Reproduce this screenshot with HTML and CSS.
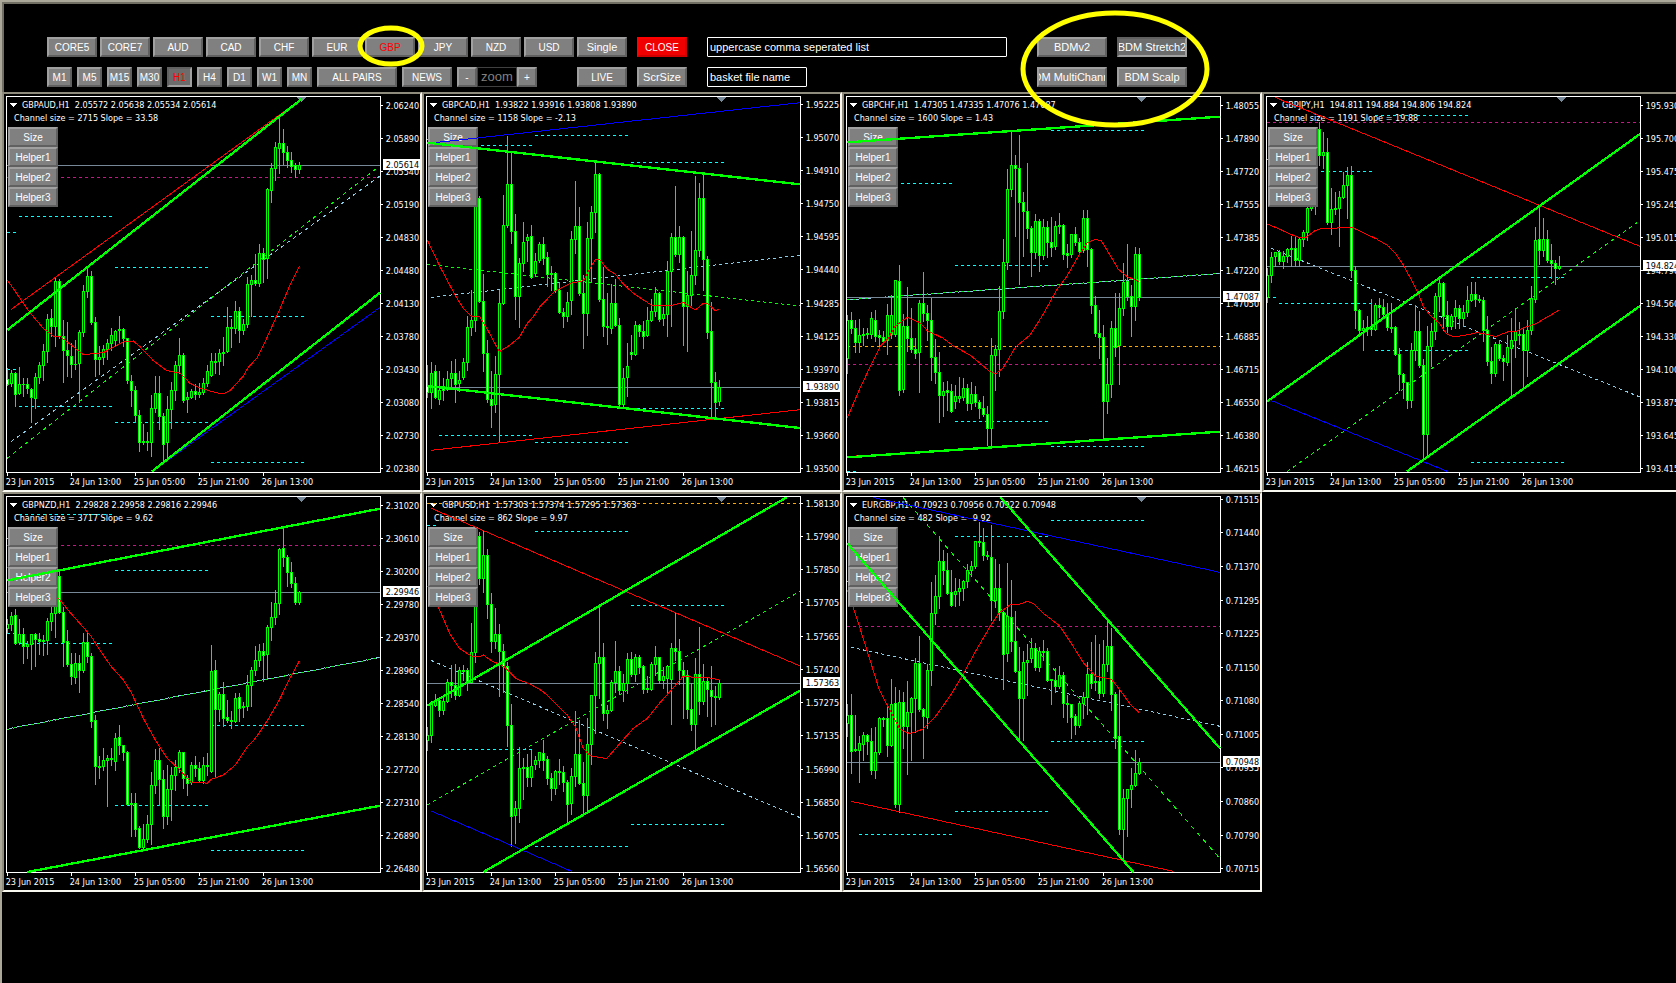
FILE: index.html
```html
<!DOCTYPE html>
<html lang="en">
<head>
<meta charset="utf-8">
<title>Basket charts</title>
<link rel="stylesheet" href="styles.css">
</head>
<body>
<header class="toolbar">
  <div class="rows pairs">
    <div class="row">
      <button class="btn">CORE5</button><button class="btn">CORE7</button><button class="btn">AUD</button><button class="btn">CAD</button><button class="btn">CHF</button><button class="btn">EUR</button><button class="btn active">GBP</button><button class="btn">JPY</button><button class="btn">NZD</button><button class="btn">USD</button>
    </div>
    <div class="row frames">
      <button class="btn tf">M1</button><button class="btn tf">M5</button><button class="btn tf">M15</button><button class="btn tf">M30</button><button class="btn tf active pressed">H1</button><button class="btn tf">H4</button><button class="btn tf">D1</button><button class="btn tf">W1</button><button class="btn tf">MN</button><button class="btn all">ALL PAIRS</button><button class="btn">NEWS</button>
      <div class="zoom"><button class="btn step">-</button><span class="zoom-label">zoom</span><button class="btn step">+</button></div>
    </div>
  </div>
  <div class="rows modes">
    <button class="btn mixed">Single</button>
    <button class="btn">LIVE</button>
  </div>
  <div class="rows actions">
    <button class="btn close">CLOSE</button>
    <button class="btn mixed">ScrSize</button>
  </div>
  <div class="rows fields">
    <input class="field" type="text" aria-label="Symbol list" value="uppercase comma seperated list">
    <input class="field short" type="text" aria-label="Basket file" value="basket file name">
  </div>
  <div class="rows">
    <div class="row templates"><button class="btn tpl">BDMv2</button><button class="btn tpl pressed">BDM Stretch2</button></div>
    <div class="row templates"><button class="btn tpl">BDM MultiChannel</button><button class="btn tpl">BDM Scalp</button></div>
  </div>
</header>
<main class="charts" id="charts"></main>
<svg class="marks" width="1240" height="140" viewBox="0 0 1240 140" aria-hidden="true">
  <ellipse cx="391" cy="46" rx="31" ry="18"/>
  <ellipse cx="1115" cy="69" rx="92" ry="56"/>
</svg>
<script src="charts.js"></script>
</body>
</html>
```
FILE: styles.css
```css
* { box-sizing: border-box; }

body {
  margin: 0;
  min-height: 100vh;
  overflow: hidden;
  position: relative;
  background: #000;
  color: #fff;
  font-family: "Liberation Sans", sans-serif;
  font-size: 10px;
  border-top: 2px solid #aca899;
  border-left: 2px solid #aca899;
}

.toolbar {
  display: flex;
  padding: 33px 0 5px 43px;
  border-top: 2px solid #716f64;
  border-left: 2px solid #716f64;
}
.rows { display: flex; flex-direction: column; gap: 10px; flex: none; }
.row { display: flex; gap: 3px; }
.pairs { margin-right: 3px; }
.frames { gap: 5px; }
.zoom { display: flex; }
.modes, .actions { width: 50px; }
.modes { margin-right: 10px; }
.actions { margin-right: 20px; }
.fields { width: 300px; margin-right: 30px; }
.templates { gap: 10px; }

.btn {
  display: flex;
  justify-content: center;
  align-items: center;
  width: 50px;
  height: 20px;
  padding: 0;
  overflow: hidden;
  white-space: nowrap;
  font: 10px "Liberation Sans", sans-serif;
  color: #fff;
  background: #808080;
  border: 2px solid;
  border-color: #a0a0a0 #606060 #606060 #a0a0a0;
  border-radius: 0;
}
.active { color: #f00; }
.pressed { background: #6c6c6c; border-color: #606060 #a0a0a0 #a0a0a0 #606060; }
.tf { width: 25px; }
.all { width: 80px; }
.step { width: 20px; }
.mixed { font-size: 11px; }
.tpl { width: 70px; font-size: 11px; }
.close { background: #f00000; border-color: #ff0000 #d00000 #d00000 #ff0000; }

.zoom-label {
  width: 40px;
  height: 20px;
  text-align: center;
  font-size: 13px;
  line-height: 18px;
  color: #808080;
  border: 1px solid #404040;
}

.field {
  width: 100%;
  height: 20px;
  padding: 0 2px;
  font: 11px "Liberation Sans", sans-serif;
  color: #fff;
  background: #000;
  border: 1px solid #fff;
  border-radius: 1px;
}
.short { width: 100px; }

.charts {
  display: grid;
  grid-template-columns: repeat(4, 1fr);
  margin-right: -6px;
}
.panel {
  position: relative;
  border: 2px solid;
  border-color: #8f8c7e #f8f7f0 #f8f7f0 #8f8c7e;
}
.plot { display: block; width: 100%; height: auto; }
.over { position: absolute; inset: 0; pointer-events: none; }
.helpers { position: absolute; left: 4px; top: 33px; }
.helpers .btn { font-size: 10px; }

.plot text {
  font-family: "DejaVu Sans Condensed", "DejaVu Sans", sans-serif;
  font-size: 27px;
  fill: #fff;
  white-space: pre;
}
.plot .now { fill: #000; }
.crisp { shape-rendering: crispEdges; }
.frame { fill: none; stroke: #fff; stroke-width: 3; }
.white { fill: #fff; }
.marker { fill: #778899; }
.price { stroke: #778899; stroke-width: 3; }
.candle { fill: #00ff00; }
.hollow { fill: #000; }
.line { fill: none; stroke-width: 3; }
.thick { stroke: #00ff00; stroke-width: 7; }
.red { stroke: #ff0000; }
.blue { stroke: #0000ff; }
.lime { stroke: #00ff00; }
.sky { stroke: #87ceeb; }
.aqua { stroke: #00ffff; }
.pink { stroke: #c71585; }
.orange { stroke: #ffa500; }

.marks { position: absolute; left: -2px; top: -2px; pointer-events: none; }
.marks ellipse { fill: none; stroke: #ffff00; stroke-width: 5; }
```
FILE: charts.js
```js
// Chart space: 3 units per pixel, plot area from (21,21) to (1140,1146).
// Candle: high, body top, body bottom, low; a leading "f" marks a filled body.
const A = [58, 336], B = [346, 624], C = [634, 912], Z = [22, 48];
const charts = [
  { title: 'GBPAUD,H1  2.05572 2.05638 2.05534 2.05614', info: 'Channel size = 2715 Slope = 33.58',
    axis: [46, '2.06240 2.05890 2.05540 2.05190 2.04830 2.04480 2.04130 2.03780 2.03430 2.03080 2.02730 2.02380'],
    price: [227, '2.05614'],
    candles: 'f835,868,882,886 840,850,880,888 f847,850,912,950 832,882,910,914 f866,882,884,920 f866,884,896,910 f894,897,922,998 850,862,924,954 816,827,862,880 762,784,827,870 673,687,784,816 f657,685,708,738 564,573,708,768 f568,573,738,744 f690,740,781,876 f697,781,797,858 f760,799,822,862 752,822,823,837 720,727,820,936 586,604,727,738 533,558,604,622 f544,558,697,702 f681,697,807,860 768,803,808,852 766,779,803,822 748,760,778,808 714,737,760,780 720,724,752,768 678,718,722,756 f716,718,746,768 f744,746,872,880 f855,874,902,948 f890,902,976,998 f960,976,1056,1085 1002,1053,1056,1062 1028,1054,1056,1082 915,955,1056,1100 858,909,954,968 f858,911,980,1018 f970,980,1062,1112 920,958,1058,1110 878,902,958,1016 815,827,902,932 744,796,826,850 f790,796,930,937 908,922,928,968 898,905,922,926 f882,905,912,928 880,908,912,922 866,880,907,914 826,844,880,890 790,815,855,858 790,814,816,850 777,790,815,852 743,787,790,826 652,711,785,788 f687,711,716,772 633,664,716,730 f652,664,722,758 687,703,722,734 562,583,704,712 556,570,582,680 f492,571,580,585 462,490,580,590 f475,490,508,578 294,298,505,565 220,235,302,338 156,172,235,272 78,160,174,250 f117,160,187,222 f168,187,210,232 f187,210,228,246 f220,226,238,262 218,226,238,250',
    ma: '22,570 58,622 90,668 130,715 160,738 178,738 210,762 250,794 310,788 340,772 370,755 400,753 420,770 460,812 500,842 540,849 570,880 600,894 634,904 668,912 690,902 730,858 745,832 770,805 800,745 840,656 870,585 898,528',
    dash: [['pink', 22, 262, 1140, 262], ['lime', 22, 1105, 1130, 235], ['sky', 34, 1055, 1140, 258]],
    aqua: [[A, 379], [Z, 427], [B, 532], [C, 679], [Z, 838], [A, 949], [B, 997], [C, 1117]],
    solid: [['red', 34, 658, 900, 30], ['blue', 455, 1145, 1140, 652], ['thick', 22, 720, 905, 27], ['thick', 455, 1145, 1140, 608]] },
  { title: 'GBPCAD,H1  1.93822 1.93916 1.93808 1.93890', info: 'Channel size = 1158 Slope = -2.13',
    axis: [43, '1.95225 1.95070 1.94910 1.94750 1.94595 1.94440 1.94285 1.94125 1.93970 1.93815 1.93660 1.93500'],
    price: [892, '1.93890'],
    candles: 'f825,888,908,922 816,850,908,954 f825,843,922,926 843,900,928,944 f864,890,902,932 843,868,898,902 813,849,864,894 f807,849,884,938 843,871,880,904 804,817,862,868 678,712,817,840 600,690,712,735 340,345,690,725 f320,325,634,638 f552,634,790,845 f750,790,928,938 f843,928,946,1013 800,853,942,966 602,640,853,1055 315,406,640,644 138,283,407,411 f185,283,424,460 f372,424,620,688 504,520,620,711 396,457,520,545 432,442,452,515 f405,439,562,564 489,514,551,556 456,462,512,516 f441,462,506,522 f486,502,553,590 528,550,553,600 f547,550,602,606 f576,602,667,670 f654,667,680,713 608,636,678,695 423,448,632,672 273,409,448,489 f351,409,610,615 f556,610,670,776 396,444,671,737 348,367,444,578 215,253,367,426 f249,253,628,634 f531,628,709,740 609,710,712,764 582,639,715,730 f567,640,706,710 f684,706,943,952 834,864,943,950 759,829,862,918 f735,787,794,808 694,706,793,796 f702,706,724,740 f693,724,738,774 652,690,735,740 627,664,690,695 591,610,664,680 f606,610,688,694 651,674,686,706 513,544,674,738 430,442,544,708 f288,442,493,498 408,442,493,516 f440,442,649,765 544,615,649,783 425,556,616,646 258,481,556,582 280,325,482,500 f250,325,508,600 f499,508,727,744 f636,724,878,985 f846,877,938,978 872,892,935,946',
    ma: '22,450 60,530 105,615 130,655 154,678 178,678 202,718 238,785 270,765 298,742 322,700 340,680 360,650 406,602 450,580 490,572 526,508 540,510 562,538 586,552 610,582 640,610 694,645 760,645 790,637 826,660 850,640 862,640 886,662 898,658',
    dash: [['lime', 22, 523, 1140, 648], ['sky', 34, 622, 1140, 496]],
    aqua: [[B, 136], [A, 166], [Z, 148], [C, 217], [C, 955], [A, 1036], [B, 1057]],
    solid: [['red', 34, 1081, 1140, 959], ['blue', 34, 159, 1140, 38], ['thick', 22, 158, 1140, 283], ['thick', 22, 888, 1140, 1014]] },
  { title: 'GBPCHF,H1  1.47305 1.47335 1.47076 1.47087', info: 'Channel size = 1600 Slope = 1.43',
    axis: [46, '1.48055 1.47890 1.47720 1.47555 1.47385 1.47220 1.47050 1.46885 1.46715 1.46550 1.46380 1.46215'],
    price: [622, '1.47087'],
    candles: '675,692,805,850 f666,692,715,730 f690,715,757,788 687,736,758,788 f715,732,736,765 714,731,734,744 666,685,732,744 f662,690,738,754 f720,736,741,765 f723,741,753,756 643,675,750,792 615,675,733,744 570,571,733,738 f525,573,900,915 672,710,898,908 f592,710,745,784 f654,745,778,786 f744,778,790,804 630,640,787,908 f546,640,671,695 f645,670,690,750 f626,690,802,870 f747,802,848,880 f788,847,916,996 876,903,916,980 f873,902,908,960 f882,904,964,966 885,919,935,954 861,919,924,938 864,895,922,932 f882,895,940,960 876,912,940,958 f889,912,938,948 f930,936,956,986 f920,955,973,980 f948,973,1016,1065 744,796,1016,1070 765,778,796,900 588,663,778,860 447,517,664,685 237,298,517,538 124,226,298,318 f196,226,236,438 f135,235,338,582 f306,338,365,498 f219,365,415,445 f408,415,488,558 372,394,488,504 f388,394,496,543 388,412,496,508 f393,412,457,502 f381,457,472,500 393,409,470,478 369,406,410,430 f402,406,492,508 f463,490,496,532 432,433,494,502 f411,433,458,465 f444,458,484,486 360,384,482,486 f360,384,478,530 f474,478,646,670 f618,646,730,740 f660,730,742,806 f705,742,934,1048 804,883,934,970 694,714,883,922 f610,714,773,798 609,655,767,882 519,576,655,676 f462,574,620,630 f585,620,650,738 471,493,650,692 f474,493,622,630',
    ma: '22,983 60,895 100,810 120,770 145,745 166,708 202,682 238,697 262,722 310,745 340,768 390,795 430,828 450,845 468,852 490,833 526,772 570,735 610,672 650,600 680,560 720,490 742,458 766,448 784,452 810,495 835,538 862,560 898,575',
    dash: [['orange', 22, 769, 1140, 769], ['pink', 22, 823, 1140, 823], ['lime', 22, 629, 1140, 550], ['sky', 31, 629, 1140, 551]],
    aqua: [[A, 280], [C, 121], [B, 526], [B, 994], [C, 1069], [Z, 1144]],
    solid: [['blue', 34, 155, 300, 137], ['red', 34, 1099, 300, 1081], ['thick', 22, 157, 1140, 80], ['thick', 22, 1102, 1140, 1025]] },
  { title: 'GBPJPY,H1  194.811 194.884 194.806 194.824', info: 'Channel size = 1191 Slope = 19.88',
    axis: [46, '195.930 195.700 195.475 195.245 195.015 194.790 194.560 194.330 194.100 193.875 193.645 193.415'],
    price: [529, '194.824'],
    candles: '535,556,622,638 487,502,556,578 486,487,500,530 f480,486,515,522 484,498,514,536 475,478,498,518 438,475,478,530 f438,475,510,530 445,448,510,530 422,427,448,468 348,355,427,452 340,345,355,362 300,320,345,372 f98,118,196,225 127,187,197,236 f144,187,398,402 294,358,398,434 306,355,358,374 303,322,355,470 246,286,322,326 231,256,286,386 f228,256,541,562 f528,541,662,715 f658,662,722,736 690,714,722,782 678,712,716,736 f627,712,718,736 640,646,718,720 f624,646,652,682 f628,652,672,686 f640,672,712,722 639,711,714,726 f709,712,793,796 f774,793,853,902 f850,853,878,924 f876,878,932,956 759,780,930,952 645,724,780,812 f663,724,826,832 f808,826,1033,1110 709,770,1033,1095 700,724,769,830 610,620,723,748 568,580,620,665 f576,580,678,720 f633,676,710,728 672,679,709,718 630,655,679,714 f645,655,686,716 645,667,686,710 588,631,667,680 576,613,632,634 f576,613,628,650 615,628,632,638 f622,630,721,754 f678,721,815,826 f772,815,851,880 756,763,850,858 f750,763,805,812 f796,804,815,870 735,772,817,826 684,751,774,920 657,724,751,802 697,732,735,764 f717,732,782,892 690,721,782,858 588,626,721,732 411,451,627,638 f345,448,480,522 384,448,482,498 f421,448,512,516 f462,512,520,565 f512,520,536,582 500,530,535,538',
    ma: '22,402 60,418 90,432 118,443 140,441 165,422 190,414 230,414 274,411 310,428 350,447 385,468 406,490 430,525 450,562 475,610 490,650 510,675 540,702 560,732 580,740 610,737 650,728 676,732 706,740 745,725 770,723 800,710 830,700 860,682 898,660',
    dash: [['pink', 22, 97, 1140, 97], ['lime', 82, 1145, 1132, 397], ['sky', 34, 475, 1140, 921]],
    aqua: [[B, 76], [A, 244], [Z, 208], [C, 562], [Z, 622], [A, 640], [B, 781], [C, 1117]],
    solid: [['red', 45, 22, 1140, 469], ['blue', 34, 932, 562, 1144], ['thick', 22, 934, 1140, 132], ['thick', 440, 1145, 1140, 648]] },
  { title: 'GBPNZD,H1  2.29828 2.29958 2.29816 2.29946', info: 'Channel size = 3717 Slope = 9.62',
    axis: [46, '2.31020 2.30610 2.30200 2.29780 2.29370 2.28960 2.28540 2.28130 2.27720 2.27310 2.26890 2.26480'],
    price: [307, '2.29946'],
    candles: '388,402,414,430 366,378,403,420 f357,375,460,462 388,433,458,462 f414,433,470,520 454,463,470,504 432,433,464,538 f430,433,448,528 f430,448,454,494 435,452,454,496 385,394,452,494 345,370,394,420 335,350,370,442 f242,258,367,370 f352,367,456,530 f420,454,523,530 f490,523,560,584 490,520,562,580 f495,520,542,608 430,457,542,546 f430,457,500,516 f490,499,695,712 f675,690,830,884 800,828,832,866 774,810,829,840 795,804,810,948 f774,804,809,826 730,745,814,840 f706,742,766,792 f765,767,787,812 f783,787,943,946 909,940,944,1040 f910,940,1018,1040 f1008,1016,1073,1076 1002,1048,1073,1080 976,1003,1048,1056 846,886,1003,1064 777,810,886,910 f774,810,868,946 f840,868,980,1016 826,898,980,1004 832,856,898,990 810,832,856,902 780,787,832,846 f786,787,866,896 f855,866,880,916 816,826,878,882 f798,826,834,858 f816,834,872,876 802,826,872,880 789,825,828,856 465,543,843,846 f510,540,658,862 606,613,658,694 f576,613,686,708 f630,683,692,696 f663,692,695,716 610,625,694,698 f609,622,656,694 636,650,653,682 555,586,650,662 532,541,586,650 468,510,541,556 462,484,511,530 f460,484,496,574 405,412,493,566 336,382,412,452 300,340,382,402 174,178,340,374 f112,175,203,230 f196,203,248,288 f216,248,280,292 f262,280,338,344 303,308,338,342',
    ma: '22,232 120,290 178,328 210,367 250,412 274,440 298,478 334,530 370,570 394,608 430,685 466,750 500,803 538,838 574,878 610,878 622,880 634,868 670,855 706,825 742,770 766,745 802,692 838,630 862,580 898,513',
    dash: [['pink', 22, 166, 1140, 166], ['lime', 22, 718, 1140, 503], ['sky', 31, 715, 1140, 502]],
    aqua: [[A, 73], [B, 241], [Z, 145], [Z, 430], [A, 460], [C, 706], [B, 946], [C, 1081]],
    solid: [['thick', 22, 271, 1140, 56], ['thick', 82, 1146, 1140, 947]] },
  { title: 'GBPUSD,H1  1.57303 1.57374 1.57295 1.57363', info: 'Channel size = 862 Slope = 9.97',
    axis: [40, '1.58130 1.57990 1.57850 1.57705 1.57565 1.57420 1.57275 1.57135 1.56990 1.56850 1.56705 1.56560'],
    price: [580, '1.57363'],
    candles: '711,737,750,780 635,640,735,756 612,630,645,648 f626,630,662,680 624,634,662,674 567,577,634,638 f525,577,586,622 f522,585,617,628 533,542,617,620 525,541,544,570 f536,541,576,600 400,487,576,580 345,350,487,518 f127,138,264,284 122,196,264,308 f177,196,343,384 f310,343,454,488 354,433,455,474 f402,433,484,618 f463,484,530,606 f516,530,707,768 f642,707,980,1070 934,955,977,1060 771,835,955,998 804,831,835,928 f792,832,863,890 780,828,862,890 798,811,824,838 786,787,811,832 f750,789,810,840 f798,808,865,882 f850,865,895,930 842,844,895,912 807,844,846,884 f828,846,878,904 f870,877,942,998 834,860,940,974 663,793,860,890 f690,793,880,884 f818,880,916,970 684,763,916,966 615,616,764,822 486,520,616,730 350,502,520,625 f459,502,670,692 646,662,670,714 570,577,662,664 453,544,577,608 f528,544,602,612 552,581,602,634 490,508,581,610 f487,508,553,560 492,502,553,574 f495,502,533,550 f525,530,597,610 560,596,598,606 516,523,598,600 468,502,523,556 f501,502,570,580 532,560,572,594 526,529,566,606 460,475,568,704 f369,475,485,510 f447,485,541,584 f517,541,555,684 f540,555,658,686 f580,658,704,722 504,553,704,780 f411,553,634,674 522,575,634,644 f562,574,598,680 f528,600,620,710 588,620,623,704 571,580,623,628',
    ma: '22,288 58,358 90,432 118,475 154,498 178,500 190,495 214,512 250,528 290,567 330,582 370,605 406,640 442,675 466,710 490,775 510,797 560,806 600,760 640,715 682,685 718,640 754,600 790,558 835,564 862,562 898,570',
    dash: [['orange', 22, 40, 1140, 40], ['lime', 22, 945, 1140, 304], ['sky', 34, 511, 1140, 983]],
    aqua: [[Z, 106], [B, 124], [C, 346], [A, 778], [C, 1003], [B, 1069]],
    solid: [['red', 34, 55, 1140, 528], ['blue', 34, 963, 455, 1144], ['thick', 22, 647, 1100, 22], ['thick', 190, 1146, 1140, 602]] },
  { title: 'EURGBP,H1  0.70923 0.70956 0.70922 0.70948', info: 'Channel size = 482 Slope = -9.92',
    axis: [28, '0.71515 0.71440 0.71370 0.71295 0.71225 0.71150 0.71080 0.71005 0.70935 0.70860 0.70790 0.70715'],
    price: [817, '0.70948'],
    candles: '642,676,700,738 f612,676,784,850 675,778,782,784 738,760,780,876 726,735,762,810 f732,735,755,794 f714,754,842,852 711,787,842,864 682,685,787,794 682,684,687,708 f652,685,766,800 567,643,766,768 f591,640,943,952 600,637,943,966 f606,637,708,776 573,667,710,854 622,625,667,810 504,520,625,728 f438,520,658,664 f655,658,680,806 522,541,682,714 276,370,541,586 255,319,370,404 138,214,320,356 f180,214,241,284 f190,241,310,312 f240,307,346,348 264,304,314,350 267,295,304,346 270,274,296,332 222,241,274,292 214,230,241,258 153,154,230,234 f96,154,158,168 f114,157,196,212 183,196,199,208 f105,202,331,392 207,295,331,352 f222,295,367,392 f364,367,493,598 219,379,490,514 f270,382,454,485 f363,454,545,548 f472,545,626,752 484,517,626,750 463,510,517,616 445,475,505,516 f460,475,532,542 472,484,532,544 450,483,486,512 f474,484,571,574 567,568,571,642 f534,570,590,606 528,557,590,594 f547,556,640,682 615,640,643,698 f642,643,683,744 f672,680,705,732 633,640,706,712 606,622,640,684 516,553,622,674 f456,553,581,596 435,574,578,600 f462,575,610,624 450,523,610,618 390,469,523,544 f415,469,613,660 f608,613,745,776 f597,740,1017,1032 897,925,1017,1112 897,898,926,1040 834,886,898,952 780,850,886,888 804,817,850,854',
    ma: '22,300 40,355 60,415 90,510 118,600 154,668 180,718 210,731 250,717 290,675 334,612 370,552 406,485 450,410 478,368 510,345 540,342 562,334 580,340 610,370 658,407 694,460 730,518 766,558 814,568 840,600 870,642 898,668',
    dash: [['pink', 22, 409, 1140, 409], ['lime', 190, 22, 1140, 1106], ['sky', 34, 472, 1140, 709]],
    aqua: [[Z, 274], [C, 91], [B, 139], [C, 754], [B, 964], [A, 1033]],
    solid: [['blue', 98, 22, 1140, 247], ['red', 34, 934, 1000, 1144], ['thick', 22, 160, 880, 1146], ['thick', 482, 22, 1140, 775]] }
];

const snap = v => Math.floor(v / 3) * 3;
const mid = v => snap(v) + 1.5;
const rect = (cls, x, y, w, h) => `<rect class="${cls}" x="${x}" y="${y}" width="${w}" height="${h}"/>`;
const solid = ([cls, x1, y1, x2, y2]) => `<line class="line ${cls}" x1="${x1}" y1="${y1}" x2="${x2}" y2="${y2}"/>`;

// Dashes repeat every 18 units measured along the x axis, whatever the slope.
function dashed([cls, x1, y1, x2, y2]) {
  const flat = y1 === y2;
  const dash = 9 * Math.hypot(x2 - x1, y2 - y1) / (x2 - x1);
  return `<line class="line ${cls}" stroke-dasharray="${dash.toFixed(2)}" x1="${snap(x1)}" y1="${flat ? mid(y1) : y1}" x2="${x2}" y2="${flat ? mid(y2) : y2}"/>`;
}

function candle(text, i) {
  const filled = text[0] === 'f';
  const [h, t, b, l] = text.replace('f', '').split(',').map(v => snap(Number(v)));
  const x = 21 + 12 * i;
  const left = Math.max(x - 3, 21);
  const right = x + 6;
  let s = rect('candle', x, h, 3, l - h + 3) + rect('candle', left, t, right - left, b - t + 3);
  if (b - t > 3) s += rect(filled ? 'white' : 'hollow', x, t + 3, 3, b - t - 3);
  return s;
}

function axes(c) {
  const labels = c.axis[1].split(' ');
  const step = (1136 - c.axis[0]) / (labels.length - 1);
  let s = labels.map((label, i) => {
    const y = snap(c.axis[0] + step * i);
    return rect('white', 1143, y, 6, 3) + `<text x="1157" y="${y + 12}">${label}</text>`;
  }).join('');
  s += ['23 Jun 2015', '24 Jun 13:00', '25 Jun 05:00', '25 Jun 21:00', '26 Jun 13:00'].map((label, i) =>
    rect('white', 21 + 192 * i, 1149, 3, 9) + `<text x="${17 + 192 * i}" y="1186">${label}</text>`).join('');
  const y = snap(c.price[0] - 3);
  return s + rect('white', 1149, y - 15, 111, 33) + `<text class="now" x="1157" y="${y + 11}">${c.price[1]}</text>`;
}

document.getElementById('charts').innerHTML = charts.map(c => `
<section class="panel">
  <svg class="plot" viewBox="12 12 1248 1188">
    <text x="66" y="54">${c.title}</text>
    <text x="42" y="93">${c.info}</text>
    <g class="crisp">
      <path class="white" d="M30 39h21l-10 12z"/>
      ${c.dash.map(dashed).join('')}
      ${c.aqua.map(([[a, b], y]) => dashed(['aqua', a, y, b, y])).join('')}
      <line class="price" x1="21" x2="1140" y1="${mid(c.price[0])}" y2="${mid(c.price[0])}"/>
      ${c.candles.split(' ').map(candle).join('')}
      <polyline class="line red" points="${c.ma}"/>
      <path class="frame" d="M19.5 19.5H1141.5V1147.5H19.5z"/>
      <path class="marker" d="M889 21h30l-15 15z"/>
    </g>
    ${axes(c)}
  </svg>
  <div class="helpers">${['Size', 'Helper1', 'Helper2', 'Helper3'].map(n => `<button class="btn">${n}</button>`).join('')}</div>
  <svg class="plot over crisp" viewBox="12 12 1248 1188">${c.solid.map(solid).join('')}</svg>
</section>`).join('');
```
